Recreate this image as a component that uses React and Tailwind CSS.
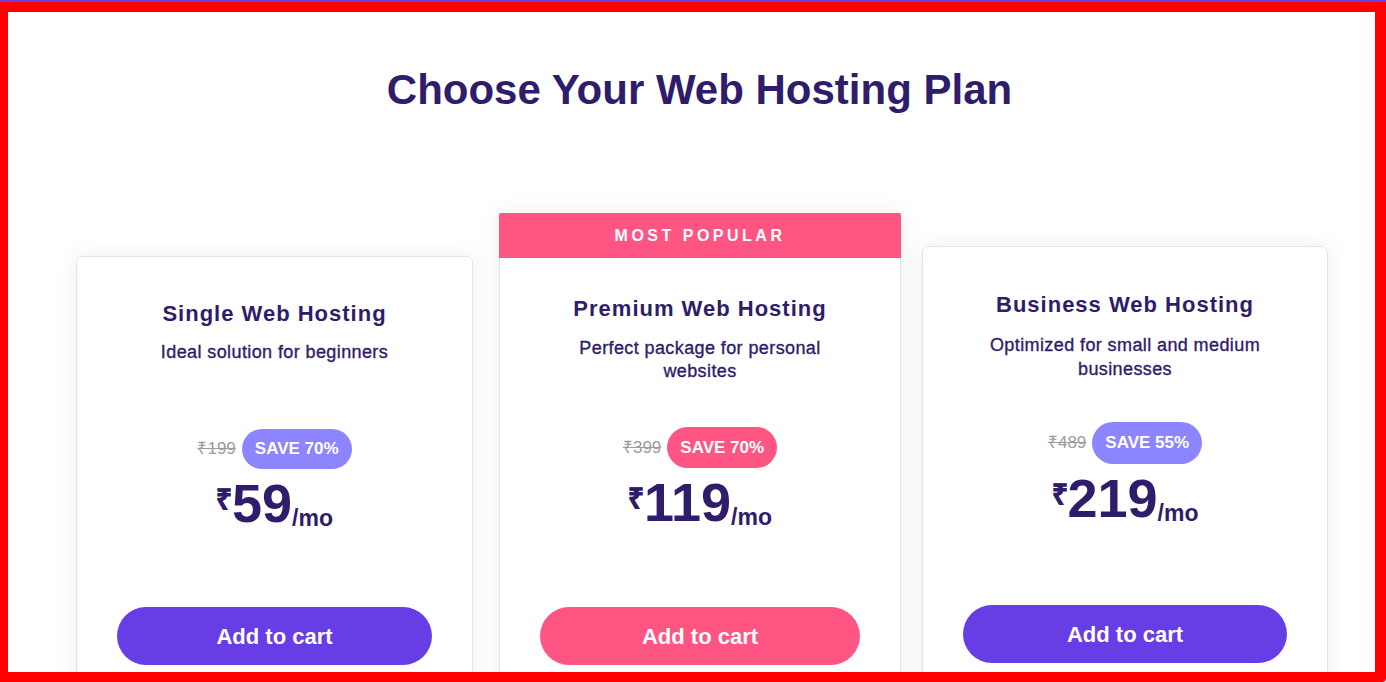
import React from "react";

const plans = [
  {
    name: "Single Web Hosting",
    desc: "Ideal solution for beginners",
    oldPrice: "₹199",
    save: "SAVE 70%",
    price: "59",
    wrap: "mt-[43px] w-[397px]",
    body: "rounded-[6px] border border-[#e4e4e4] pt-[45px]",
    subGap: "mt-[14px] leading-[24px]",
    priceGap: "mt-[41px]",
    badge: "h-[40px] bg-[#8c85ff]",
    btnGap: "mt-[77px]",
    btn: "bg-[#673de6]",
  },
  {
    name: "Premium Web Hosting",
    desc: "Perfect package for personal websites",
    oldPrice: "₹399",
    save: "SAVE 70%",
    price: "119",
    popular: true,
    wrap: "ml-[26px] w-[402px]",
    body: "border-x border-b border-[#e4e4e4] pt-[39px]",
    subGap: "mt-[16px] leading-[23px]",
    priceGap: "mt-[42px]",
    badge: "h-[41px] bg-[#fe5583]",
    btnGap: "mt-[78px]",
    btn: "bg-[#fe5583]",
  },
  {
    name: "Business Web Hosting",
    desc: "Optimized for small and medium businesses",
    oldPrice: "₹489",
    save: "SAVE 55%",
    price: "219",
    wrap: "mt-[33px] ml-[21px] w-[406px]",
    body: "rounded-[6px] border border-[#e4e4e4] pt-[46px]",
    subGap: "mt-[16px] leading-[24px]",
    priceGap: "mt-[41px]",
    badge: "h-[42px] bg-[#8c85ff]",
    btnGap: "mt-[80px]",
    btn: "bg-[#673de6]",
  },
];

const PlanCard = ({ plan }) => {
  return (
    <div className={`shrink-0 shadow-[0_0_22px_rgba(0,0,0,0.07)] ${plan.wrap}`}>
      {/* Banner only on the popular plan */}
      {plan.popular && (
        <div className="flex h-[45px] items-center justify-center rounded-t-[2px] bg-[#fe5583] text-[16px] font-bold tracking-[3.5px] text-white">
          MOST POPULAR
        </div>
      )}
      <div
        className={`flex flex-col items-center bg-white px-10 pb-12 text-center ${plan.body}`}
      >
        <h2 className="text-[22px] font-bold leading-[24px] tracking-[1px] text-[#2f1c6a]">
          {plan.name}
        </h2>
        <p
          className={`min-h-[48px] px-4 text-[18px] tracking-[0.4px] text-[#2f1c6a] [-webkit-text-stroke:0.35px_#2f1c6a] ${plan.subGap}`}
        >
          {plan.desc}
        </p>

        <div className={`flex items-center justify-center gap-[6px] ${plan.priceGap}`}>
          <span className="text-[17px] text-[#9c9c9c] line-through">
            {plan.oldPrice}
          </span>
          <span
            className={`flex items-center rounded-full px-[13px] text-[17px] font-bold text-white ${plan.badge}`}
          >
            {plan.save}
          </span>
        </div>

        <div className="mt-[7px] flex h-[54px] items-start justify-center text-[#2f1c6a]">
          <span className="mt-[10px] text-[28px] font-bold leading-none [-webkit-text-stroke:0.8px_#2f1c6a]">
            ₹
          </span>
          <span className="text-[54px] font-bold leading-[54px]">
            {plan.price}
          </span>
          <span className="self-end text-[23px] font-bold leading-none">/mo</span>
        </div>

        <button
          className={`flex h-[58px] w-full items-center justify-center rounded-full text-[22px] font-bold text-white ${plan.btnGap} ${plan.btn}`}
        >
          Add to cart
        </button>
      </div>
    </div>
  );
};

export default function App() {
  return (
    <div className="h-[682px] w-[1386px] overflow-hidden rounded-br-[4px] border-t-2 border-[#6a40e3] bg-[#ff0000] pb-[10px] pl-[8px] pr-[11px] pt-[10px] font-['Liberation_Sans',Arial,sans-serif]">
      <div className="h-full overflow-hidden bg-white">
        <h1 className="mt-[54px] pl-[16px] text-center text-[42px] font-bold leading-[48px] text-[#2f1c6a]">
          Choose Your Web Hosting Plan
        </h1>

        <div className="ml-[68px] mt-[99px] flex items-start">
          {plans.map((plan) => (
            <PlanCard key={plan.name} plan={plan} />
          ))}
        </div>
      </div>
    </div>
  );
}
